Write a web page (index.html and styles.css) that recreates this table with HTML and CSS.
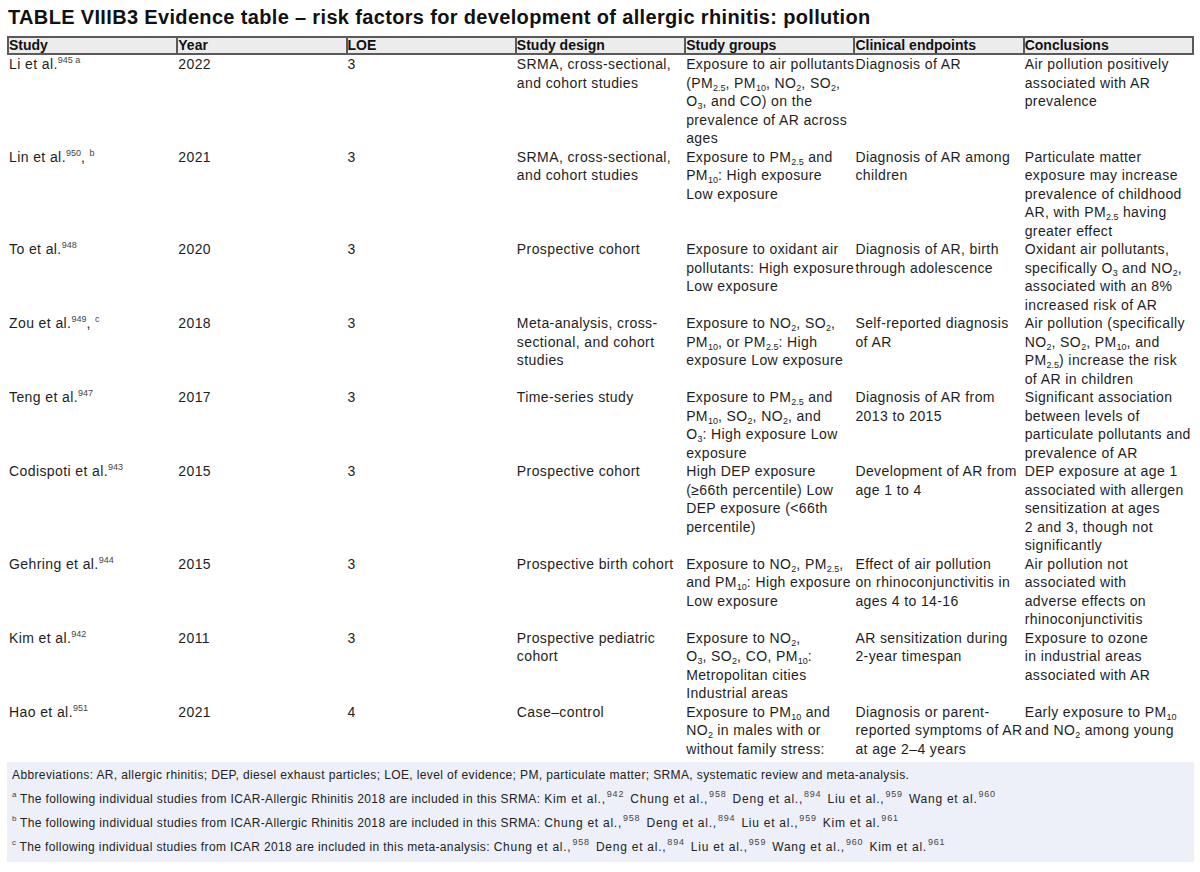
FILE: index.html
```html
<!DOCTYPE html>
<html lang="en">
<head>
<meta charset="utf-8">
<title>TABLE VIIIB3 Evidence table</title>
<link rel="stylesheet" href="styles.css">
</head>
<body>
<div class="page">
  <h1 class="title">TABLE VIIIB3 Evidence table – risk factors for development of allergic rhinitis: pollution</h1>
  <table class="evidence">
    <colgroup>
      <col class="c"><col class="c"><col class="c"><col class="c"><col class="c"><col class="c"><col class="c">
    </colgroup>
    <thead>
      <tr>
        <th>Study</th><th>Year</th><th>LOE</th><th>Study design</th><th>Study groups</th><th>Clinical endpoints</th><th>Conclusions</th>
      </tr>
    </thead>
    <tbody>
      <tr>
        <td>Li et al.<sup>945 a</sup></td>
        <td>2022</td>
        <td>3</td>
        <td>SRMA, cross-sectional,<br>and cohort studies</td>
        <td>Exposure to air pollutants<br>(PM<sub>2.5</sub>, PM<sub>10</sub>, NO<sub>2</sub>, SO<sub>2</sub>,<br>O<sub>3</sub>, and CO) on the<br>prevalence of AR across<br>ages</td>
        <td>Diagnosis of AR</td>
        <td>Air pollution positively<br>associated with AR<br>prevalence</td>
      </tr>
      <tr>
        <td>Lin et al.<sup>950</sup>, <sup>b</sup></td>
        <td>2021</td>
        <td>3</td>
        <td>SRMA, cross-sectional,<br>and cohort studies</td>
        <td>Exposure to PM<sub>2.5</sub> and<br>PM<sub>10</sub>: High exposure<br>Low exposure</td>
        <td>Diagnosis of AR among<br>children</td>
        <td>Particulate matter<br>exposure may increase<br>prevalence of childhood<br>AR, with PM<sub>2.5</sub> having<br>greater effect</td>
      </tr>
      <tr>
        <td>To et al.<sup>948</sup></td>
        <td>2020</td>
        <td>3</td>
        <td>Prospective cohort</td>
        <td>Exposure to oxidant air<br>pollutants: High exposure<br>Low exposure</td>
        <td>Diagnosis of AR, birth<br>through adolescence</td>
        <td>Oxidant air pollutants,<br>specifically O<sub>3</sub> and NO<sub>2</sub>,<br>associated with an 8%<br>increased risk of AR</td>
      </tr>
      <tr>
        <td>Zou et al.<sup>949</sup>, <sup>c</sup></td>
        <td>2018</td>
        <td>3</td>
        <td>Meta-analysis, cross-<br>sectional, and cohort<br>studies</td>
        <td>Exposure to NO<sub>2</sub>, SO<sub>2</sub>,<br>PM<sub>10</sub>, or PM<sub>2.5</sub>: High<br>exposure Low exposure</td>
        <td>Self-reported diagnosis<br>of AR</td>
        <td>Air pollution (specifically<br>NO<sub>2</sub>, SO<sub>2</sub>, PM<sub>10</sub>, and<br>PM<sub>2.5</sub>) increase the risk<br>of AR in children</td>
      </tr>
      <tr>
        <td>Teng et al.<sup>947</sup></td>
        <td>2017</td>
        <td>3</td>
        <td>Time-series study</td>
        <td>Exposure to PM<sub>2.5</sub> and<br>PM<sub>10</sub>, SO<sub>2</sub>, NO<sub>2</sub>, and<br>O<sub>3</sub>: High exposure Low<br>exposure</td>
        <td>Diagnosis of AR from<br>2013 to 2015</td>
        <td>Significant association<br>between levels of<br>particulate pollutants and<br>prevalence of AR</td>
      </tr>
      <tr>
        <td>Codispoti et al.<sup>943</sup></td>
        <td>2015</td>
        <td>3</td>
        <td>Prospective cohort</td>
        <td>High DEP exposure<br>(≥66th percentile) Low<br>DEP exposure (&lt;66th<br>percentile)</td>
        <td>Development of AR from<br>age 1 to 4</td>
        <td>DEP exposure at age 1<br>associated with allergen<br>sensitization at ages<br>2 and 3, though not<br>significantly</td>
      </tr>
      <tr>
        <td>Gehring et al.<sup>944</sup></td>
        <td>2015</td>
        <td>3</td>
        <td>Prospective birth cohort</td>
        <td>Exposure to NO<sub>2</sub>, PM<sub>2.5</sub>,<br>and PM<sub>10</sub>: High exposure<br>Low exposure</td>
        <td>Effect of air pollution<br>on rhinoconjunctivitis in<br>ages 4 to 14-16</td>
        <td>Air pollution not<br>associated with<br>adverse effects on<br>rhinoconjunctivitis</td>
      </tr>
      <tr>
        <td>Kim et al.<sup>942</sup></td>
        <td>2011</td>
        <td>3</td>
        <td>Prospective pediatric<br>cohort</td>
        <td>Exposure to NO<sub>2</sub>,<br>O<sub>3</sub>, SO<sub>2</sub>, CO, PM<sub>10</sub>:<br>Metropolitan cities<br>Industrial areas</td>
        <td>AR sensitization during<br>2-year timespan</td>
        <td>Exposure to ozone<br>in industrial areas<br>associated with AR</td>
      </tr>
      <tr>
        <td>Hao et al.<sup>951</sup></td>
        <td>2021</td>
        <td>4</td>
        <td>Case–control</td>
        <td>Exposure to PM<sub>10</sub> and<br>NO<sub>2</sub> in males with or<br>without family stress:</td>
        <td>Diagnosis or parent-<br>reported symptoms of AR<br>at age 2–4 years</td>
        <td>Early exposure to PM<sub>10</sub><br>and NO<sub>2</sub> among young</td>
      </tr>
    </tbody>
  </table>
  <div class="notes">
    <p>Abbreviations: AR, allergic rhinitis; DEP, diesel exhaust particles; LOE, level of evidence; PM, particulate matter; SRMA, systematic review and meta-analysis.</p>
    <p><sup>a</sup> The following individual studies from ICAR-Allergic Rhinitis 2018 are included in this SRMA: <span class="cites">Kim et al.,<sup class="ref">942</sup> Chung et al.,<sup class="ref">958</sup> Deng et al.,<sup class="ref">894</sup> Liu et al.,<sup class="ref">959</sup> Wang et al.<sup class="ref">960</sup></span></p>
    <p><sup>b</sup> The following individual studies from ICAR-Allergic Rhinitis 2018 are included in this SRMA: <span class="cites">Chung et al.,<sup class="ref">958</sup> Deng et al.,<sup class="ref">894</sup> Liu et al.,<sup class="ref">959</sup> Kim et al.<sup class="ref">961</sup></span></p>
    <p><sup>c</sup> The following individual studies from ICAR 2018 are included in this meta-analysis: <span class="cites">Chung et al.,<sup class="ref">958</sup> Deng et al.,<sup class="ref">894</sup> Liu et al.,<sup class="ref">959</sup> Wang et al.,<sup class="ref">960</sup> Kim et al.<sup class="ref">961</sup></span></p>
  </div>
</div>
</body>
</html>
```

FILE: styles.css
```css
html, body {
  margin: 0;
  padding: 0;
  background: #ffffff;
}

body {
  font-family: "Liberation Sans", Arial, sans-serif;
  color: #1e1e1e;
}

.page {
  width: 1187px;
  padding: 5px 6px 0 7px;
}

.title {
  margin: 0 0 7px 1px;
  font-size: 20px;
  line-height: 24px;
  font-weight: bold;
  letter-spacing: 0.34px;
  color: #111;
  white-space: nowrap;
}

.evidence {
  width: 1187px;
  table-layout: fixed;
  border-collapse: collapse;
  font-size: 14px;
}

.evidence .c {
  width: 14.2857%;
}

.evidence th {
  text-align: left;
  font-weight: bold;
  font-size: 14px;
  line-height: 15px;
  padding: 0;
  background: #ececec;
  border-top: 2px solid #5a5a5a;
  border-bottom: 2px solid #5a5a5a;
  border-left: 2px solid #5a5a5a;
  color: #111;
  white-space: nowrap;
}

.evidence th:last-child {
  border-right: 2px solid #5a5a5a;
}

.evidence td {
  vertical-align: top;
  text-align: left;
  padding: 0 0 0 1px;
  line-height: 18.5px;
  letter-spacing: 0.4px;
  white-space: nowrap;
}

sub {
  font-size: 9px;
  line-height: 0;
  vertical-align: -3px;
  letter-spacing: 0;
}

sup {
  font-size: 9px;
  line-height: 0;
  vertical-align: 6px;
  letter-spacing: 0;
  color: #444;
}

.notes {
  margin-top: 4px;
  background: #edf0f8;
  padding: 1px 0 3px 5px;
  font-size: 12px;
  letter-spacing: 0.38px;
  color: #222;
}

.notes p {
  margin: 0;
  line-height: 24px;
  white-space: nowrap;
}

.notes sup {
  font-size: 8px;
  vertical-align: 6px;
}

.notes .cites {
  letter-spacing: 0.75px;
}

.notes .ref {
  font-size: 9px;
  letter-spacing: 0.8px;
  margin: 0 2px 0 1px;
}
```
